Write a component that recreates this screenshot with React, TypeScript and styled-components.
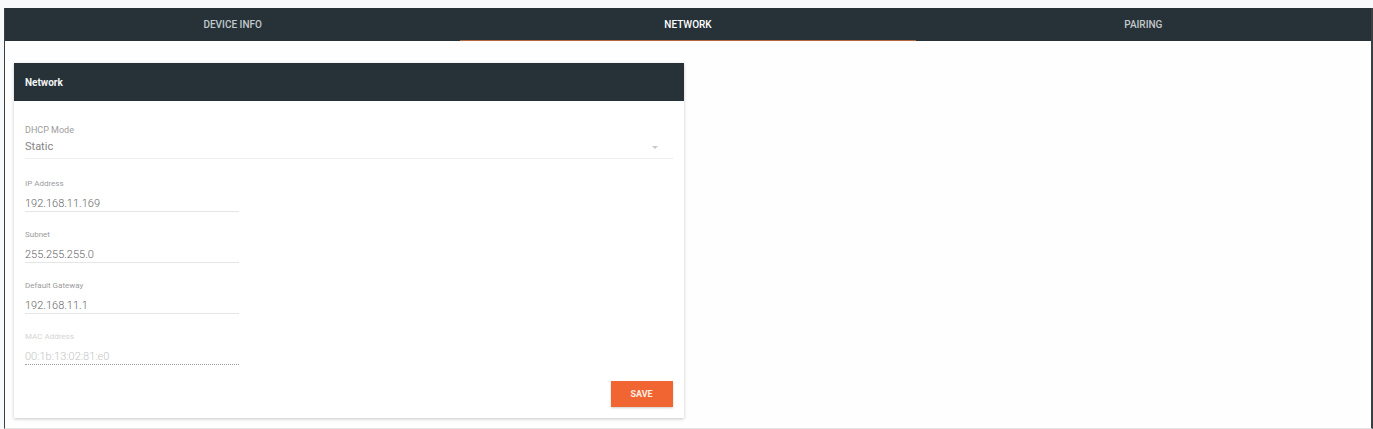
import React, { useState } from "react";
import styled, { createGlobalStyle } from "styled-components";

const GlobalStyle = createGlobalStyle`
  *, *::before, *::after { box-sizing: border-box; }
  body {
    margin: 0;
    background: #f8f9fa;
    font-family: Roboto, "Liberation Sans", sans-serif;
  }
`;

const Frame = styled.div`
  margin: 8px 0 0 4px;
  border: 1px solid #3a3f42;
  border-width: 0 2px 1px 1px;
  border-bottom-color: #e4e4e4;
  background: #fefefe;
`;

const TabBar = styled.nav`
  display: grid;
  grid-template-columns: repeat(3, 1fr);
  background: #263238;
`;

const Tab = styled.button<{ $active: boolean }>`
  height: 33px;
  padding: 2px 0 0;
  border: 0;
  border-bottom: 1px solid ${(p) => (p.$active ? "#b5683f" : "transparent")};
  background: transparent;
  color: ${(p) => (p.$active ? "#ffffff" : "#c3c8ca")};
  font: 500 10px/14px Roboto, "Liberation Sans", sans-serif;
  text-transform: uppercase;
  cursor: pointer;
`;

const Content = styled.main`
  display: grid;
  grid-template-columns: 1fr 1fr;
  gap: 10px;
  padding: 22px 8px 10px 9px;
`;

const Card = styled.section`
  background: #ffffff;
  box-shadow: 0 1px 3px rgba(0, 0, 0, 0.22);
`;

const CardTitle = styled.h2`
  margin: 0;
  padding: 2px 11px 0;
  background: #263238;
  color: #f2f4f5;
  font-size: 10px;
  font-weight: 700;
  line-height: 36px;
`;

const Form = styled.form`
  display: flex;
  flex-direction: column;
  gap: 16px;
  padding: 22px 11px 11px;
`;

const Field = styled.div<{ $wide?: boolean }>`
  display: flex;
  flex-direction: column;
  gap: ${(p) => (p.$wide ? 1 : 3)}px;
  width: ${(p) => (p.$wide ? "100%" : "33%")};
  margin-bottom: ${(p) => (p.$wide ? 2 : 0)}px;
`;

const Label = styled.label<{ $large?: boolean; $muted?: boolean }>`
  color: ${(p) => (p.$muted ? "#d4d4d4" : "#9c9c9c")};
  font-size: ${(p) => (p.$large ? 9 : 8)}px;
  line-height: 14px;
`;

const TextInput = styled.input`
  width: 100%;
  height: 18px;
  padding: 2px 0 0;
  border: 0;
  border-bottom: 1px solid #e6e6e6;
  border-radius: 0;
  outline: 0;
  background: transparent;
  color: #666666;
  font: 300 11px/14px Roboto, "Liberation Sans", sans-serif;

  &:disabled {
    border-bottom: 1px dotted #a0a0a0;
    color: #c4c4c4;
  }
`;

const SelectRow = styled.div`
  display: flex;
  align-items: center;
  height: 21px;
  padding-right: 15px;
  padding-bottom: 2px;
  border-bottom: 1px solid #eeeeee;
`;

const Select = styled.select`
  flex: 1;
  height: 18px;
  padding: 0;
  border: 0;
  outline: 0;
  appearance: none;
  background: transparent;
  color: #858585;
  font: 400 11px/18px Roboto, "Liberation Sans", sans-serif;
`;

const SaveButton = styled.button`
  align-self: flex-end;
  width: 62px;
  height: 26px;
  padding: 0;
  border: 0;
  background: #f06532;
  box-shadow: 0 1px 2px rgba(0, 0, 0, 0.2);
  color: #ffece2;
  font: 700 9px/26px Roboto, "Liberation Sans", sans-serif;
  text-transform: uppercase;
  cursor: pointer;
`;

const tabs = ["Device Info", "Network", "Pairing"];

const fields = [
  { id: "ip", label: "IP Address", value: "192.168.11.169" },
  { id: "subnet", label: "Subnet", value: "255.255.255.0" },
  { id: "gateway", label: "Default Gateway", value: "192.168.11.1" },
  { id: "mac", label: "MAC Address", value: "00:1b:13:02:81:e0", disabled: true },
];

export default function App() {
  const [active, setActive] = useState("Network");
  return (
    <>
      <GlobalStyle />
      <Frame>
        <TabBar>
          {tabs.map((tab) => (
            <Tab key={tab} type="button" $active={tab === active} onClick={() => setActive(tab)}>
              {tab}
            </Tab>
          ))}
        </TabBar>
        <Content>
          <Card>
            <CardTitle>Network</CardTitle>
            <Form onSubmit={(e) => e.preventDefault()}>
              <Field $wide>
                <Label $large htmlFor="dhcp">DHCP Mode</Label>
                <SelectRow>
                  <Select id="dhcp" defaultValue="Static">
                    <option>Static</option>
                    <option>DHCP</option>
                  </Select>
                  <svg width="6" height="3" viewBox="0 0 6 3" aria-hidden="true">
                    <path d="M0 0h6L3 3z" fill="#c8c8c8" />
                  </svg>
                </SelectRow>
              </Field>
              {fields.map((f) => (
                <Field key={f.id}>
                  <Label htmlFor={f.id} $muted={f.disabled}>{f.label}</Label>
                  <TextInput id={f.id} defaultValue={f.value} disabled={f.disabled} />
                </Field>
              ))}
              <SaveButton type="submit">Save</SaveButton>
            </Form>
          </Card>
        </Content>
      </Frame>
    </>
  );
}
